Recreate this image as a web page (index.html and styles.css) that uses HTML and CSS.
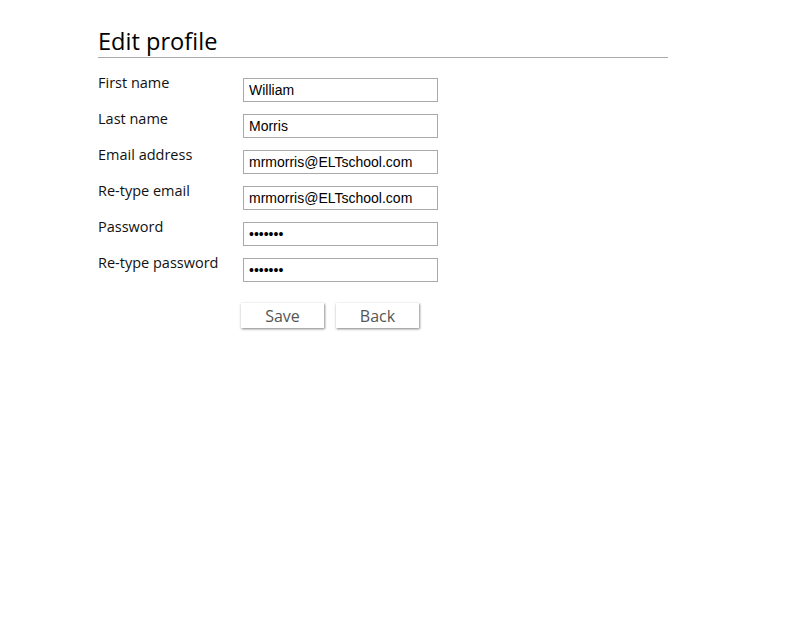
FILE: index.html
```html
<!DOCTYPE html>
<html>
<head>
<meta charset="utf-8">
<link rel="stylesheet" href="styles.css">
</head>
<body>
<div class="page">
  <h1 class="title">Edit profile</h1>
  <form class="form">
    <div class="row"><label class="label">First name</label><input class="field" type="text" value="William"></div>
    <div class="row"><label class="label">Last name</label><input class="field" type="text" value="Morris"></div>
    <div class="row"><label class="label">Email address</label><input class="field" type="text" value="mrmorris@ELTschool.com"></div>
    <div class="row"><label class="label">Re-type email</label><input class="field" type="text" value="mrmorris@ELTschool.com"></div>
    <div class="row"><label class="label">Password</label><input class="field" type="password" value="1234567"></div>
    <div class="row"><label class="label">Re-type password</label><input class="field" type="password" value="1234567"></div>
    <div class="actions">
      <button type="button" class="btn">Save</button>
      <button type="button" class="btn">Back</button>
    </div>
  </form>
</div>
</body>
</html>
```

FILE: styles.css
```css
html, body {
  margin: 0;
  padding: 0;
  background: #fff;
}
body {
  font-family: "Open Sans", sans-serif;
  color: #111;
}
.page {
  margin-left: 98px;
  width: 570px;
  padding-top: 26px;
}
.title {
  margin: 0;
  font-size: 23.6px;
  font-weight: 400;
  line-height: 31px;
  color: #000;
  border-bottom: 1px solid #aaa;
}
.form {
  margin-top: 14px;
}
.row {
  display: flex;
  align-items: flex-start;
  height: 36px;
}
.label {
  width: 145px;
  flex: none;
  padding-top: 1px;
  font-size: 14.5px;
  line-height: 19px;
  color: #111;
}
.field {
  box-sizing: border-box;
  margin: 6px 0 0 0;
  width: 195px;
  height: 24px;
  padding: 0 5px;
  border: 1px solid #a9a9a9;
  border-radius: 0;
  font-family: "Liberation Sans", Arial, sans-serif;
  font-size: 14px;
  color: #000;
  background: #fff;
  outline: none;
}
.actions {
  display: flex;
  align-items: flex-start;
  gap: 12px;
  margin-top: 15px;
  margin-left: 143px;
  padding-bottom: 6px;
}
.btn {
  box-sizing: border-box;
  width: 83px;
  height: 25px;
  padding: 1px 0 0 0;
  border: none;
  background: #fff;
  box-shadow: 1px 1px 2px rgba(0, 0, 0, 0.35), 0 1px 3px rgba(0, 0, 0, 0.2);
  font-family: "Open Sans", sans-serif;
  font-size: 16px;
  line-height: 24px;
  color: #555;
  cursor: pointer;
}
```
